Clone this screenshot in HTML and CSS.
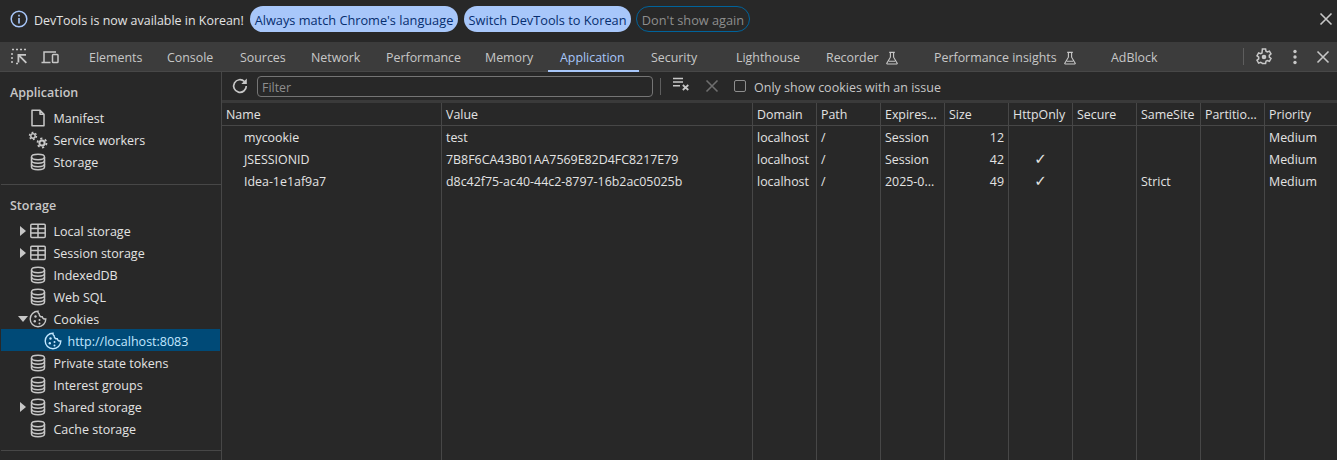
FILE: index.html
```html
<!DOCTYPE html>
<html lang="en">
<head>
<meta charset="utf-8">
<title>DevTools</title>
<link rel="stylesheet" href="styles.css">
</head>
<body>
<svg class="defs" width="0" height="0">
  <symbol id="i-db" viewBox="0 0 20 20"><g fill="none" stroke="currentColor" stroke-width="1.5"><ellipse cx="10" cy="5" rx="6.5" ry="2.7"/><path d="M3.5 5v10c0 1.500 2.900 2.700 6.500 2.700s6.500-1.200 6.500-2.700V5"/><path d="M3.500 8.500c0 1.500 2.900 2.700 6.500 2.700s6.500-1.200 6.500-2.700M3.500 12c0 1.500 2.900 2.700 6.500 2.700s6.500-1.200 6.500-2.700"/></g></symbol>
  <symbol id="i-table" viewBox="0 0 20 20"><g fill="none" stroke="currentColor" stroke-width="1.5"><rect x="2.800" y="3.200" width="14.400" height="13.300" rx="1"/><path d="M2.800 7.600h14.400M2.800 12h14.400M10 3.200v13.300"/></g></symbol>
  <symbol id="i-cookie" viewBox="0 0 20 20"><path d="M10 2.200a7.800 7.800 0 1 0 7.800 7.800c-1.800.3-3.100-.6-3.500-2.200-1.800.2-3.300-1-3.200-3-.9-.4-1.300-1.400-1.100-2.600Z" fill="none" stroke="currentColor" stroke-width="1.400"/><g fill="currentColor"><circle cx="7.500" cy="7.500" r="1.200"/><circle cx="6.800" cy="12.300" r="1.200"/><circle cx="11.500" cy="11" r="1"/><circle cx="11.500" cy="14.500" r="1"/></g></symbol>
  <symbol id="i-flask" viewBox="0 0 20 20"><path d="M6.500 3h7M8 3v6L3.500 16.500c-.3.600 0 1 .6 1h11.800c.6 0 .9-.4.600-1L12 9V3M6 14h8" fill="none" stroke="currentColor" stroke-width="1.400"/></symbol>
  <symbol id="i-x" viewBox="0 0 20 20"><path d="M4.500 4.500l11 11M15.500 4.500l-11 11" fill="none" stroke="currentColor" stroke-width="1.600"/></symbol>
</svg>

<header class="infobar">
  <svg class="info-icon" viewBox="0 0 20 20" width="20" height="20"><circle cx="10" cy="10" r="7.800" fill="none" stroke="currentColor" stroke-width="1.500"/><path d="M9.200 9h1.600v5.500H9.200zM9.200 5.700h1.600v1.700H9.200z" fill="currentColor"/></svg>
  <span class="info-text">DevTools is now available in Korean!</span>
  <button class="pill pill-a">Always match Chrome's language</button>
  <button class="pill pill-b">Switch DevTools to Korean</button>
  <button class="pill pill-o">Don't show again</button>
  <svg class="info-close" width="20" height="20"><use href="#i-x"/></svg>
</header>

<nav class="tabbar">
  <div class="tools">
    <svg class="ico" viewBox="0 0 20 20" width="20" height="20"><path d="M2 2.500h2M6 2.500h2M10 2.500h2M14 2.500h2M2 6v2M2 10v2M2 14v2M6 16.500h2" fill="none" stroke="currentColor" stroke-width="1.500"/><path d="M7.500 7H16v1.800h-5.400l6.400 6.400-1.300 1.300-6.400-6.400v5.400H7.500Z" fill="currentColor"/></svg>
    <svg class="ico" viewBox="0 0 20 20" width="20" height="20"><path d="M1.500 15.500h9M4 15V5h12" fill="none" stroke="currentColor" stroke-width="1.500"/><rect x="12.500" y="7.500" width="5.500" height="8" rx=".8" fill="none" stroke="currentColor" stroke-width="1.500"/></svg>
  </div>
  <div class="tabs">
    <span class="tab">Elements</span>
    <span class="tab">Console</span>
    <span class="tab">Sources</span>
    <span class="tab">Network</span>
    <span class="tab">Performance</span>
    <span class="tab">Memory</span>
    <span class="tab tab-on">Application</span>
    <span class="tab">Security</span>
    <span class="tab">Lighthouse</span>
    <span class="tab">Recorder<svg class="flask" width="16" height="16"><use href="#i-flask"/></svg></span>
    <span class="tab">Performance insights<svg class="flask" width="16" height="16"><use href="#i-flask"/></svg></span>
    <span class="tab">AdBlock</span>
  </div>
  <div class="actions">
    <svg class="ico gear" viewBox="0 0 20 20" width="20" height="20"><path d="M8.400 1.800h3.200l.4 2.200 1.300.7 2.100-.8 1.600 2.800-1.700 1.400v1.800l1.700 1.400-1.600 2.800-2.100-.8-1.300.7-.4 2.200H8.400L8 15.800l-1.300-.7-2.100.8L3 13.100l1.700-1.400V9.900L3 8.500l1.600-2.800 2.100.8L8 5.800Z" transform="translate(0 .2)" fill="none" stroke="currentColor" stroke-width="1.500"/><circle cx="10" cy="10" r="2.300" fill="currentColor"/></svg>
    <svg class="ico dots" viewBox="0 0 20 20" width="20" height="20"><g fill="currentColor"><circle cx="10" cy="4.500" r="1.700"/><circle cx="10" cy="10" r="1.700"/><circle cx="10" cy="15.500" r="1.700"/></g></svg>
    <svg class="ico shut" width="20" height="20"><use href="#i-x"/></svg>
  </div>
</nav>

<div class="main">
  <aside class="side">
    <section class="group">
      <h2 class="group-title">Application</h2>
      <div class="item"><span class="arrow"></span><svg class="item-ico" viewBox="0 0 20 20" width="20" height="20"><path d="M4 2.200h8l4 4v11.600H4Z M12 2.200v4h4" fill="none" stroke="currentColor" stroke-width="1.500" stroke-linejoin="round"/></svg>Manifest</div>
      <div class="item"><span class="arrow"></span><svg class="item-ico" viewBox="0 0 20 20" width="20" height="20"><g fill="none" stroke="currentColor"><circle cx="5" cy="6" r="2.200" stroke-width="1.500"/><circle cx="5" cy="6" r="3.500" stroke-width="1.400" stroke-dasharray="1.800 1.870"/><circle cx="14" cy="13" r="2.600" stroke-width="2"/><circle cx="14" cy="13" r="4.500" stroke-width="1.800" stroke-dasharray="2.200 2.510"/></g></svg>Service workers</div>
      <div class="item"><span class="arrow"></span><svg class="item-ico" width="20" height="20"><use href="#i-db"/></svg>Storage</div>
    </section>
    <section class="group group-2">
      <h2 class="group-title title-2">Storage</h2>
      <div class="item"><span class="arrow arrow-r"></span><svg class="item-ico" width="20" height="20"><use href="#i-table"/></svg>Local storage</div>
      <div class="item"><span class="arrow arrow-r"></span><svg class="item-ico" width="20" height="20"><use href="#i-table"/></svg>Session storage</div>
      <div class="item"><span class="arrow"></span><svg class="item-ico" width="20" height="20"><use href="#i-db"/></svg>IndexedDB</div>
      <div class="item"><span class="arrow"></span><svg class="item-ico" width="20" height="20"><use href="#i-db"/></svg>Web SQL</div>
      <div class="item"><span class="arrow arrow-d"></span><svg class="item-ico" width="20" height="20"><use href="#i-cookie"/></svg>Cookies</div>
      <div class="item item-sel"><svg class="item-ico" width="20" height="20"><use href="#i-cookie"/></svg>http://localhost:8083</div>
      <div class="item"><span class="arrow"></span><svg class="item-ico" width="20" height="20"><use href="#i-db"/></svg>Private state tokens</div>
      <div class="item"><span class="arrow"></span><svg class="item-ico" width="20" height="20"><use href="#i-db"/></svg>Interest groups</div>
      <div class="item"><span class="arrow arrow-r"></span><svg class="item-ico" width="20" height="20"><use href="#i-db"/></svg>Shared storage</div>
      <div class="item"><span class="arrow"></span><svg class="item-ico" width="20" height="20"><use href="#i-db"/></svg>Cache storage</div>
    </section>
  </aside>

  <section class="content">
    <div class="toolbar">
      <svg class="refresh" viewBox="0 0 20 20" width="20" height="20"><path d="M16.300 10a6.300 6.300 0 1 1-1.900-4.500" fill="none" stroke="currentColor" stroke-width="1.700"/><path d="M16.800 2.500v5.500h-5.500Z" fill="currentColor"/></svg>
      <div class="filter">Filter</div>
      <span class="tsep"></span>
      <svg class="clear" viewBox="0 0 20 20" width="20" height="20"><path d="M2 2.500h10M2 6h10M2 9.800h7" stroke="currentColor" stroke-width="1.400"/><path d="M11.800 9l5.500 5M17.300 9l-5.500 5" stroke="currentColor" stroke-width="1.700"/></svg>
      <svg class="del" width="20" height="20"><use href="#i-x"/></svg>
      <span class="check"></span>
      <span class="check-label">Only show cookies with an issue</span>
    </div>
    <div class="grid">
      <div class="row head">
        <span>Name</span><span>Value</span><span>Domain</span><span>Path</span><span>Expires...</span><span>Size</span><span>HttpOnly</span><span>Secure</span><span>SameSite</span><span>Partitio...</span><span>Priority</span>
      </div>
      <div class="body">
        <div class="row"><span class="nm">mycookie</span><span>test</span><span>localhost</span><span>/</span><span>Session</span><span class="num">12</span><span></span><span></span><span></span><span></span><span>Medium</span></div>
        <div class="row"><span class="nm">JSESSIONID</span><span>7B8F6CA43B01AA7569E82D4FC8217E79</span><span>localhost</span><span>/</span><span>Session</span><span class="num">42</span><span class="tick">✓</span><span></span><span></span><span></span><span>Medium</span></div>
        <div class="row"><span class="nm">Idea-1e1af9a7</span><span>d8c42f75-ac40-44c2-8797-16b2ac05025b</span><span>localhost</span><span>/</span><span>2025-0...</span><span class="num">49</span><span class="tick">✓</span><span></span><span>Strict</span><span></span><span>Medium</span></div>
        <div class="row fill"><span></span><span></span><span></span><span></span><span></span><span></span><span></span><span></span><span></span><span></span><span></span></div>
      </div>
    </div>
  </section>
</div>
</body>
</html>
```

FILE: styles.css
```css
* { box-sizing: border-box; }
html, body { margin: 0; height: 100%; }
body {
  width: 1337px;
  height: 460px;
  overflow: hidden;
  background: #282828;
  color: #e3e3e3;
  font-family: "Open Sans", "Noto Sans", sans-serif;
  font-size: 12.400px;
  display: flex;
  flex-direction: column;
}
.defs { position: absolute; }
svg { display: block; flex: none; }

/* info bar */
.infobar {
  height: 42px;
  flex: none;
  display: flex;
  align-items: center;
  padding-left: 9px;
  padding-bottom: 4px;
  background: #282828;
}
.info-icon { color: #a8c7fa; }
.info-text { margin-left: 5px; width: 216px; padding-top: 2px; font-size: 12.450px; color: #e3e3e3; white-space: nowrap; }
.pill {
  height: 26px;
  padding: 1px 0 0;
  border-radius: 13px;
  border: 1px solid transparent;
  font: 12.750px "Open Sans", sans-serif;
  text-align: center;
  white-space: nowrap;
}
.pill-a { width: 208px; background: #a8c7fa; color: #062e6f; }
.pill-b { width: 167px; margin-left: 6px; background: #a8c7fa; color: #062e6f; }
.pill-o { width: 114px; margin-left: 5px; background: transparent; border-color: #00639b; color: #8e8e8e; }
.info-close { margin-left: auto; margin-right: 1px; color: #c7c7c7; }

/* tabs */
.tabbar {
  height: 30px;
  flex: none;
  display: flex;
  background: #3c3c3c;
  border-bottom: 1px solid #474747;
  color: #c7c7c7;
}
.tools { width: 70px; padding-left: 10px; display: flex; align-items: center; gap: 10px; flex: none; margin-right: 7px; }
.tools::after { content: ""; width: 1px; height: 17px; background: #5e5e5e; margin-left: 2px; }
.tabs {
  flex: none;
  display: grid;
  grid-template-columns: 78px 73px 71px 75px 99px 75px 91px 85px 90px 108px 177px 60px;
  height: 30px;
}
.tab {
  padding-left: 12px;
  padding-top: 1px;
  display: flex;
  align-items: center;
  height: 30px;
  color: #c7c7c7;
  font-size: 12.400px;
  white-space: nowrap;
}
.tab-on { color: #a8c7fa; border-bottom: 2px solid #a8c7fa; padding-top: 2px; }
.flask { margin-left: 5px; color: #c7c7c7; }
.actions { margin-left: auto; display: flex; align-items: center; width: 94px; border-left: 1px solid #5e5e5e; height: 17px; margin-top: 6px; padding-left: 10px; }
.dots { margin-left: 11px; }
.shut { margin-left: 8px; }

/* layout */
.main { flex: 1; display: flex; min-height: 0; }
.side {
  width: 222px;
  flex: none;
  border-right: 1px solid #474747;
  padding-left: 1px;
}
.group-title {
  margin: 0;
  padding: 13px 0 0 9px;
  height: 29px;
  line-height: 16px;
  font-size: 12.500px;
  font-weight: 600;
  color: #c7c7c7;
}
.group { padding-bottom: 12px; }
.group-2 { border-top: 1px solid #474747; padding-bottom: 11px; border-bottom: 1px solid #474747; }
.group > .group-title + .item { margin-top: 5px; }
.item {
  height: 22px;
  display: flex;
  align-items: center;
  padding-left: 16px;
  padding-top: 2px;
  font-size: 12.500px;
  color: #e3e3e3;
  white-space: nowrap;
}
.arrow { width: 11px; height: 10px; flex: none; }
.arrow-r { width: 0; height: 0; border-left: 6px solid #c7c7c7; border-top: 5px solid transparent; border-bottom: 5px solid transparent; margin-left: 3px; margin-right: 2px; }
.arrow-d { width: 0; height: 0; border-top: 6px solid #c7c7c7; border-left: 5px solid transparent; border-right: 5px solid transparent; margin-left: 1px; }
.item-ico { color: #c7c7c7; margin-right: 5.500px; }
.item-sel { background: #004a77; color: #c2e7ff; padding-left: 42px; margin-right: 1px; }
.item-sel .item-ico { color: #c2e7ff; margin-right: 4.500px; }

/* right */
.content { flex: 1; min-width: 0; display: flex; flex-direction: column; }
.toolbar {
  height: 31px;
  flex: none;
  display: flex;
  align-items: center;
  padding-left: 8px;
  border-bottom: 3px solid #3a3a3a;
  color: #c7c7c7;
}
.refresh { color: #c7c7c7; }
.filter {
  margin-left: 7px;
  width: 396px;
  height: 21px;
  border: 1px solid #757575;
  border-radius: 4px;
  padding-left: 4px;
  line-height: 21px;
  color: #8e8e8e;
}
.tsep { width: 1px; height: 17px; background: #5e5e5e; margin-left: 7px; }
.clear { margin-left: 10px; color: #c7c7c7; }
.del { margin-left: 11px; color: #6e6e6e; }
.check { width: 12px; height: 12px; margin-left: 12px; border: 1px solid #8e8e8e; border-radius: 2px; }
.check-label { margin-left: 8px; font-size: 12.500px; line-height: 20px; padding-top: 3px; color: #c7c7c7; white-space: nowrap; }

.grid { flex: 1; display: flex; flex-direction: column; min-height: 0; }
.row {
  display: grid;
  grid-template-columns: 220px 311px 64px 64px 64px 64px 64px 64px 64px 64px 72px;
  height: 22px;
}
.row > span {
  padding: 1px 4px 0;
  line-height: 22px;
  border-right: 1px solid #474747;
  white-space: nowrap;
  overflow: hidden;
  color: #e3e3e3;
}
.row > span:last-child { border-right: 0; }
.head { height: 23px; border-bottom: 1px solid #474747; flex: none; }
.body { flex: 1; display: flex; flex-direction: column; min-height: 0; }
.body .row { flex: none; }
.body .fill { flex: 1; }
.row > .nm { padding-left: 22px; }
.row > .num { text-align: right; padding-right: 4px; }
.row > .tick { text-align: center; font-size: 15px; padding-top: 0; font-family: "DejaVu Sans", sans-serif; }
```
